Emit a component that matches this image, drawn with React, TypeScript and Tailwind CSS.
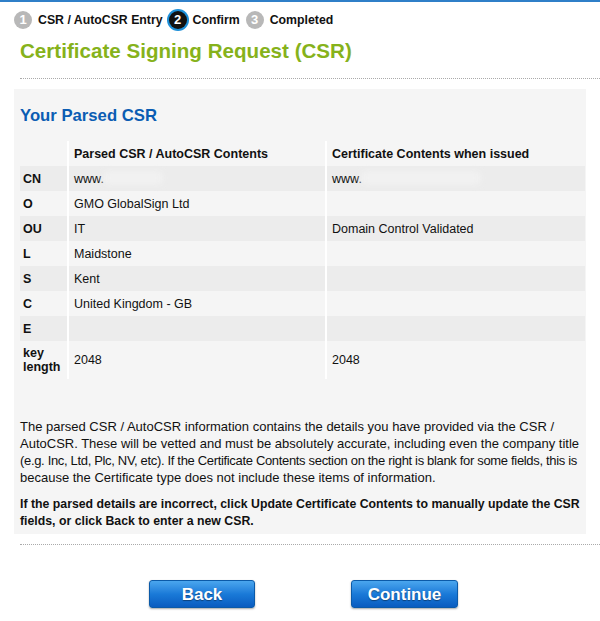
import React from "react";

const rows: { k: React.ReactNode; a: string; b: string; tall?: boolean }[] = [
  { k: "CN", a: "www.", b: "www." },
  { k: "O", a: "GMO GlobalSign Ltd", b: "" },
  { k: "OU", a: "IT", b: "Domain Control Validated" },
  { k: "L", a: "Maidstone", b: "" },
  { k: "S", a: "Kent", b: "" },
  { k: "C", a: "United Kingdom - GB", b: "" },
  { k: "E", a: "", b: "" },
  { k: <>key<br />length</>, a: "2048", b: "2048", tall: true },
];

function Step({ n, active }: { n: number; active?: boolean }) {
  return (
    <span
      className={
        active
          ? "flex h-[18px] w-[18px] items-center justify-center rounded-full bg-[#111] text-[13px] font-bold text-white ring-2 ring-[#1d8fd8]"
          : "flex h-[18px] w-[18px] items-center justify-center rounded-full bg-[#b8b8b8] text-[13px] font-bold text-white"
      }
    >
      {n}
    </span>
  );
}

export default function App() {
  return (
    <div className="min-h-[621px] w-[600px] bg-white font-['Liberation_Sans',Arial,sans-serif] text-[#111]">
      <div className="h-[2px] bg-[#2f7fc8]" />

      <div className="flex items-center gap-[6px] pl-[14px] pt-[9px] text-[12.3px] font-bold">
        <Step n={1} />
        <span>CSR / AutoCSR Entry</span>
        <Step n={2} active />
        <span>Confirm</span>
        <Step n={3} />
        <span>Completed</span>
      </div>

      <h1 className="pl-[20px] pt-[9px] text-[20.6px] font-bold leading-[26px] text-[#86b21b]">
        Certificate Signing Request (CSR)
      </h1>

      <div className="ml-[20px] mt-[14px] border-t border-dotted border-[#aaa]" />

      <div className="mx-[14px] mt-[10px] bg-[#f5f5f5] px-[6px] pb-[4px] pt-[16px]">
        <h2 className="text-[16.7px] font-bold leading-[22px] text-[#0b5db3]">Your Parsed CSR</h2>

        <table className="mt-[14px] w-[565px] border-collapse text-[12.5px]">
          <thead>
            <tr className="h-[25px]">
              <th className="w-[48px] border-r-2 border-white" />
              <th className="w-[258px] border-r-2 border-white pl-[5px] text-left font-bold">
                Parsed CSR / AutoCSR Contents
              </th>
              <th className="pl-[5px] text-left font-bold">Certificate Contents when issued</th>
            </tr>
          </thead>
          <tbody>
            {rows.map((r, i) => (
              <tr
                key={i}
                className={(r.tall ? "h-[38px] " : "h-[25px] ") + (i % 2 === 0 ? "bg-[#ececec]" : "")}
              >
                <td className="border-r-2 border-white pl-[3px] align-middle font-bold leading-[14px]">{r.k}</td>
                <td className="relative border-r-2 border-white pl-[5px]">
                  {r.a}
                  {i === 0 && (
                    <span className="absolute left-[34px] top-[5px] h-[14px] w-[60px] rounded bg-[#f1f1f1] blur-[3px]" />
                  )}
                </td>
                <td className="relative pl-[5px]">
                  {r.b}
                  {i === 0 && (
                    <span className="absolute left-[34px] top-[5px] h-[14px] w-[120px] rounded bg-[#f1f1f1] blur-[3px]" />
                  )}
                </td>
              </tr>
            ))}
          </tbody>
        </table>

        <div className="mt-[39px] whitespace-nowrap text-[13px] leading-[17px]">
          <p>The parsed CSR / AutoCSR information contains the details you have provided via the CSR /</p>
          <p>AutoCSR. These will be vetted and must be absolutely accurate, including even the company title</p>
          <p className="tracking-[-0.33px]">
            (e.g. Inc, Ltd, Plc, NV, etc). If the Certificate Contents section on the right is blank for some fields, this is
          </p>
          <p>because the Certificate type does not include these items of information.</p>
        </div>
        <p className="mt-[10px] whitespace-nowrap text-[12.3px] font-bold leading-[17px]">
          If the parsed details are incorrect, click Update Certificate Contents to manually update the CSR
          <br />
          fields, or click Back to enter a new CSR.
        </p>
      </div>

      <div className="ml-[20px] mt-[10px] border-t border-dotted border-[#aaa]" />

      <div className="mt-[35px] flex gap-[96px] pl-[149px]">
        <button className="h-[28px] w-[106px] rounded-[3px] border border-[#0b5aa8] bg-gradient-to-b from-[#4aa6ee] via-[#1a7ad8] to-[#0a5cc0] text-[17px] font-bold text-white shadow-[0_1px_2px_rgba(0,0,0,0.35)] [text-shadow:0_1px_1px_rgba(0,0,0,0.4)]">
          Back
        </button>
        <button className="h-[28px] w-[107px] rounded-[3px] border border-[#0b5aa8] bg-gradient-to-b from-[#4aa6ee] via-[#1a7ad8] to-[#0a5cc0] text-[17px] font-bold text-white shadow-[0_1px_2px_rgba(0,0,0,0.35)] [text-shadow:0_1px_1px_rgba(0,0,0,0.4)]">
          Continue
        </button>
      </div>
    </div>
  );
}
